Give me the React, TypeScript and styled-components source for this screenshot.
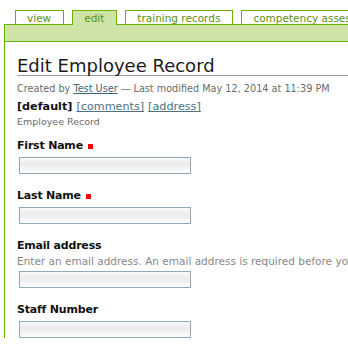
import React from 'react';
import styled, { createGlobalStyle } from 'styled-components';

const GlobalStyle = createGlobalStyle`
  html, body {
    margin: 0;
    padding: 0;
    background: #fff;
    overflow: hidden;
  }
  body {
    font-family: "DejaVu Sans", Verdana, sans-serif;
    color: #222;
  }
`;

const green = '#6cb000';

const Page = styled.div`
  width: 348px;
  overflow: hidden;
  padding-top: 10px;
`;

const TabRow = styled.ul`
  display: flex;
  gap: 8px;
  list-style: none;
  margin: 0;
  padding: 0 0 0 15px;
  height: 14px;
`;

const Tab = styled.li<{ $active?: boolean }>`
  box-sizing: border-box;
  flex-shrink: 0;
  height: ${p => (p.$active ? '15px' : '14px')};
  padding: 0 12px 0 11px;
  border: 1px solid ${green};
  border-bottom: none;
  background: ${p => (p.$active ? '#cfe3a7' : '#fff')};
  color: #5c8f12;
  font-size: 10.5px;
  line-height: 14px;
  white-space: nowrap;
  position: relative;
  z-index: 1;
`;

const Panel = styled.div`
  margin-left: 4px;
  border-left: 1px solid ${green};
`;

const TabBar = styled.div`
  height: 16px;
  background: #cfe3a7;
  border-top: 1px solid ${green};
  border-bottom: 1px solid ${green};
`;

const Content = styled.div`
  padding: 14px 0 0 12px;
`;

const Title = styled.h1`
  margin: 0;
  font-size: 18px;
  font-weight: normal;
  line-height: 19px;
  color: #1a1a1a;
  border-bottom: 1px solid #8e9fab;
`;

const Meta = styled.div`
  margin-top: 6px;
  font-size: 9.7px;
  line-height: 14px;
  color: #6a6a6a;
  white-space: nowrap;
`;

const MetaLink = styled.a`
  color: #3f6476;
  text-decoration: underline;
`;

const Views = styled.div`
  margin-top: 3px;
  font-size: 11.2px;
  line-height: 16px;
  white-space: nowrap;
`;

const CurrentView = styled.strong`
  color: #111;
`;

const ViewLink = styled.a`
  color: #4a7284;
  text-decoration: underline;
  margin-left: 4px;
`;

const SubTitle = styled.div`
  font-size: 9.5px;
  line-height: 14px;
  color: #6a6a6a;
`;

const Form = styled.form`
  margin-top: 9px;
`;

const Field = styled.div`
  margin-bottom: 14px;
`;

const Label = styled.label`
  display: flex;
  align-items: center;
  gap: 5px;
  font-size: 11px;
  font-weight: bold;
  letter-spacing: -0.2px;
  line-height: 16px;
  color: #111;
`;

const Required = styled.span`
  display: inline-block;
  width: 5px;
  height: 5px;
  background: #f00;
`;

const Hint = styled.div`
  font-size: 10.5px;
  line-height: 14px;
  color: #888;
  white-space: nowrap;
`;

const Input = styled.input`
  display: block;
  box-sizing: border-box;
  width: 172px;
  height: 17px;
  margin: 3px 0 0 2px;
  border: 1px solid #8fa9b8;
  background: linear-gradient(to bottom, #fafafa 0%, #ebebeb 40%, #fdfdfd 100%);
  padding: 0 3px;
  font: inherit;
  font-size: 11px;
  outline: none;
`;

const tabs = [
  { label: 'view' },
  { label: 'edit', active: true },
  { label: 'training records' },
  { label: 'competency assessments' },
];

const fields = [
  { label: 'First Name', required: true },
  { label: 'Last Name', required: true },
  {
    label: 'Email address',
    hint: 'Enter an email address. An email address is required before you can save this record.',
  },
  { label: 'Staff Number' },
];

export default function App() {
  return (
    <>
      <GlobalStyle />
      <Page>
        <TabRow>
          {tabs.map(t => (
            <Tab key={t.label} $active={t.active}>
              {t.label}
            </Tab>
          ))}
        </TabRow>
        <Panel>
          <TabBar />
          <Content>
            <Title>Edit Employee Record</Title>
            <Meta>
              Created by <MetaLink href="#">Test User</MetaLink> — Last modified May 12, 2014 at 11:39 PM
            </Meta>
            <Views>
              <CurrentView>[default]</CurrentView>
              <ViewLink href="#">[comments]</ViewLink>
              <ViewLink href="#">[address]</ViewLink>
            </Views>
            <SubTitle>Employee Record</SubTitle>
            <Form onSubmit={e => e.preventDefault()}>
              {fields.map(f => (
                <Field key={f.label}>
                  <Label>
                    {f.label}
                    {f.required && <Required />}
                  </Label>
                  {f.hint && <Hint>{f.hint}</Hint>}
                  <Input type="text" />
                </Field>
              ))}
            </Form>
          </Content>
        </Panel>
      </Page>
    </>
  );
}
